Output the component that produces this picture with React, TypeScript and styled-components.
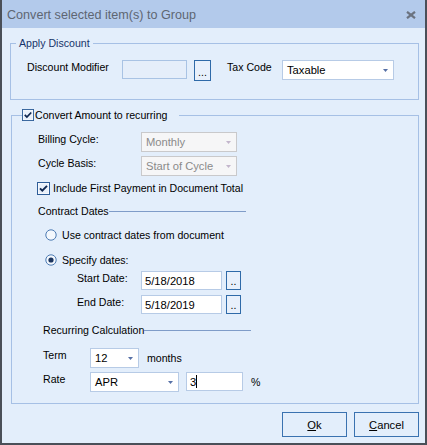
import React from 'react';
import styled, { createGlobalStyle } from 'styled-components';

const GlobalStyle = createGlobalStyle`
  body {
    margin: 0;
    background: #ffffff;
    font-family: "Liberation Sans", Arial, sans-serif;
  }
`;

const Window = styled.div`
  width: 427px;
  height: 445px;
  box-sizing: border-box;
  display: flex;
  flex-direction: column;
  background: #e3eefb;
  border: 2px solid #4a4f58;
  border-top: none;
  font-size: 10.6px;
  color: #000;
`;

const TitleBar = styled.div`
  height: 28px;
  flex: none;
  display: flex;
  align-items: center;
  justify-content: space-between;
  padding: 1px 9px 0 5px;
  box-sizing: border-box;
  background: #b3caeb;
`;

const Title = styled.span`
  font-size: 12.6px;
  color: #5e6672;
`;

const Body = styled.div`
  display: flex;
  flex-direction: column;
  padding: 8px 6px 0 8px;
`;

const GroupBox = styled.fieldset<{ $inset?: number; $padLeft: number; $padBottom: number }>`
  margin: 0 0 0 ${p => p.$inset ?? 0}px;
  padding: 10px 0 ${p => p.$padBottom}px ${p => p.$padLeft}px;
  border: 1px solid #a6c0e5;
  min-width: 0;
  display: flex;
  flex-direction: column;
  & + & {
    margin-top: 8px;
  }
`;

const Legend = styled.legend<{ $dark?: boolean }>`
  padding: 0 3px;
  line-height: 14px;
  font-size: 10.6px;
  color: ${p => (p.$dark ? '#000' : '#17346a')};
`;

const CheckLegend = styled.legend`
  padding: 0 12px 0 0;
  line-height: 14px;
  font-size: 10.6px;
  display: flex;
  align-items: center;
`;

const Row = styled.div<{ $top?: number; $left?: number }>`
  display: flex;
  align-items: flex-start;
  margin-top: ${p => p.$top ?? 0}px;
  margin-left: ${p => p.$left ?? 0}px;
`;

const FieldLabel = styled.span<{ $w?: number }>`
  flex: none;
  width: ${p => (p.$w ? `${p.$w}px` : 'auto')};
  margin-top: 1px;
  line-height: 13px;
  white-space: nowrap;
`;

const SideLabel = styled.span<{ $gap: number }>`
  align-self: center;
  margin-left: ${p => p.$gap}px;
  line-height: 13px;
`;

const ComboBox = styled.div<{ $w: number; $disabled?: boolean }>`
  flex: none;
  width: ${p => p.$w}px;
  height: 20px;
  box-sizing: border-box;
  display: flex;
  align-items: center;
  justify-content: space-between;
  padding: 0 5px 0 4px;
  border: 1px solid ${p => (p.$disabled ? '#c9c9cb' : '#b7cbe6')};
  background: ${p => (p.$disabled ? '#f6f6f7' : '#ffffff')};
  color: ${p => (p.$disabled ? '#8a8a8a' : '#000')};
  font-size: 11.2px;
`;

const TextBox = styled.div<{ $w: number; $h: number; $muted?: boolean }>`
  flex: none;
  width: ${p => p.$w}px;
  height: ${p => p.$h}px;
  box-sizing: border-box;
  display: flex;
  align-items: center;
  padding-left: 3px;
  border: 1px solid ${p => (p.$muted ? '#a9c3e4' : '#b7cbe6')};
  background: ${p => (p.$muted ? '#e5eefa' : '#ffffff')};
  font-size: 11.2px;
`;

const Caret = styled.span`
  display: inline-block;
  width: 1px;
  height: 13px;
  background: #000;
  margin-left: 0;
`;

const DotButton = styled.div<{ $w: number; $h: number; $gap: number }>`
  flex: none;
  width: ${p => p.$w}px;
  height: ${p => p.$h}px;
  margin-left: ${p => p.$gap}px;
  box-sizing: border-box;
  display: flex;
  align-items: flex-end;
  justify-content: center;
  padding-bottom: 3px;
  border: 1px solid #2f6aa8;
  background: #e8f0fb;
  font-size: 10.6px;
  line-height: 10px;
`;

const Heading = styled.div<{ $top: number; $left: number }>`
  width: 208px;
  display: flex;
  align-items: center;
  margin-top: ${p => p.$top}px;
  margin-left: ${p => p.$left}px;
  line-height: 13px;
`;

const HeadingLine = styled.div`
  flex: 1;
  height: 1px;
  background: #7f9cc8;
`;

const OptionRow = styled.div<{ $top: number; $left: number; $gap: number }>`
  display: flex;
  align-items: center;
  height: 14px;
  margin-top: ${p => p.$top}px;
  margin-left: ${p => p.$left}px;
  gap: ${p => p.$gap}px;
  line-height: 13px;
`;

const Footer = styled.div`
  display: flex;
  justify-content: flex-end;
  gap: 7px;
  margin-top: 8px;
`;

const DialogButton = styled.button`
  width: 65px;
  height: 25px;
  padding: 0;
  border: 1px solid #3a72b0;
  background: #e3eefb;
  font-family: "Liberation Sans", Arial, sans-serif;
  font-size: 11.2px;
  color: #000;
  u {
    text-decoration: underline;
  }
`;

const Arrow = ({ disabled }: { disabled?: boolean }) => (
  <svg width="5" height="3" viewBox="0 0 5 3">
    <path d="M0 0 H5 L2.5 3 Z" fill={disabled ? '#c3b6cc' : '#5670a6'} />
  </svg>
);

const CheckBox = ({ size }: { size: number }) => (
  <svg width={size} height={size} viewBox="0 0 13 13" style={{ flex: 'none' }}>
    <rect x="0.5" y="0.5" width="12" height="12" fill="#ffffff" stroke="#2e5d98" />
    <rect x="1.5" y="1.5" width="10" height="10" fill="#e9f0fa" />
    <path d="M3 6.3 L5.3 8.7 L10 3.8" fill="none" stroke="#0f2750" strokeWidth="1.9" />
  </svg>
);

const Radio = ({ checked }: { checked?: boolean }) => (
  <svg width="12" height="12" viewBox="0 0 12 12" style={{ flex: 'none' }}>
    <circle cx="6" cy="6" r="5.2" fill="#f4f8fd" stroke="#4d7bb3" strokeWidth="1" />
    {checked && <circle cx="6" cy="6" r="2.6" fill="#1b355f" />}
  </svg>
);

const CloseIcon = () => (
  <svg width="10" height="8" viewBox="0 0 10 8">
    <path d="M1 0.8 L9 7.2 M9 0.8 L1 7.2" stroke="#6b7380" strokeWidth="2.2" />
  </svg>
);

export default function App() {
  return (
    <>
      <GlobalStyle />
      <Window>
        <TitleBar>
          <Title>Convert selected item(s) to Group</Title>
          <CloseIcon />
        </TitleBar>
        <Body>
          <GroupBox $padLeft={5} $padBottom={18}>
            <Legend>Apply Discount</Legend>
            <Row $left={11}>
              <FieldLabel $w={95}>Discount Modifier</FieldLabel>
              <TextBox $w={65} $h={19} $muted />
              <DotButton $w={17} $h={21} $gap={7}>...</DotButton>
              <FieldLabel $w={55} style={{ marginLeft: 16 }}>Tax Code</FieldLabel>
              <ComboBox $w={112}>
                <span>Taxable</span>
                <Arrow />
              </ComboBox>
            </Row>
          </GroupBox>

          <GroupBox $inset={1} $padLeft={10} $padBottom={11}>
            <CheckLegend>
              <CheckBox size={12} />
              <span style={{ marginLeft: 1 }}>Convert Amount to recurring</span>
            </CheckLegend>

            <Row $left={16}>
              <FieldLabel $w={103}>Billing Cycle:</FieldLabel>
              <ComboBox $w={96} $disabled>
                <span>Monthly</span>
                <Arrow disabled />
              </ComboBox>
            </Row>
            <Row $left={16} $top={4}>
              <FieldLabel $w={103}>Cycle Basis:</FieldLabel>
              <ComboBox $w={96} $disabled>
                <span>Start of Cycle</span>
                <Arrow disabled />
              </ComboBox>
            </Row>

            <OptionRow $top={5} $left={15} $gap={3}>
              <CheckBox size={13} />
              <span>Include First Payment in Document Total</span>
            </OptionRow>

            <Heading $top={10} $left={16}>
              <span>Contract Dates</span>
              <HeadingLine />
            </Heading>

            <OptionRow $top={10} $left={23} $gap={5}>
              <Radio />
              <span>Use contract dates from document</span>
            </OptionRow>
            <OptionRow $top={11} $left={23} $gap={5}>
              <Radio checked />
              <span>Specify dates:</span>
            </OptionRow>

            <Row $left={55} $top={4}>
              <FieldLabel $w={64}>Start Date:</FieldLabel>
              <TextBox $w={81} $h={19}>5/18/2018</TextBox>
              <DotButton $w={15} $h={19} $gap={4}>..</DotButton>
            </Row>
            <Row $left={55} $top={5}>
              <FieldLabel $w={64}>End Date:</FieldLabel>
              <TextBox $w={81} $h={19}>5/18/2019</TextBox>
              <DotButton $w={15} $h={19} $gap={4}>..</DotButton>
            </Row>

            <Heading $top={10} $left={21}>
              <span>Recurring Calculation</span>
              <HeadingLine />
            </Heading>

            <Row $left={21} $top={11}>
              <FieldLabel $w={47}>Term</FieldLabel>
              <ComboBox $w={49}>
                <span>12</span>
                <Arrow />
              </ComboBox>
              <SideLabel $gap={8}>months</SideLabel>
            </Row>
            <Row $left={21} $top={4}>
              <FieldLabel $w={47}>Rate</FieldLabel>
              <ComboBox $w={89}>
                <span>APR</span>
                <Arrow />
              </ComboBox>
              <TextBox $w={57} $h={19} style={{ marginLeft: 7 }}>
                3<Caret />
              </TextBox>
              <SideLabel $gap={8}>%</SideLabel>
            </Row>
          </GroupBox>

          <Footer>
            <DialogButton>
              <u>O</u>k
            </DialogButton>
            <DialogButton>
              <u>C</u>ancel
            </DialogButton>
          </Footer>
        </Body>
      </Window>
    </>
  );
}
